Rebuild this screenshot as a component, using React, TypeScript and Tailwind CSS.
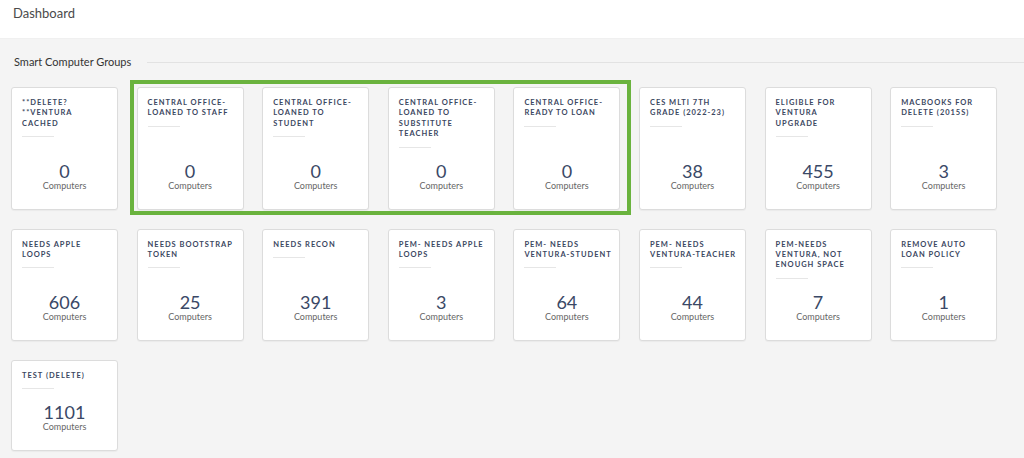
import React from "react";

type Group = { lines: string[]; count: number };

const groups: Group[] = [
  { lines: ["**DELETE?", "**VENTURA", "CACHED"], count: 0 },
  { lines: ["CENTRAL OFFICE-", "LOANED TO STAFF"], count: 0 },
  { lines: ["CENTRAL OFFICE-", "LOANED TO", "STUDENT"], count: 0 },
  { lines: ["CENTRAL OFFICE-", "LOANED TO", "SUBSTITUTE", "TEACHER"], count: 0 },
  { lines: ["CENTRAL OFFICE-", "READY TO LOAN"], count: 0 },
  { lines: ["CES MLTI 7TH", "GRADE (2022-23)"], count: 38 },
  { lines: ["ELIGIBLE FOR", "VENTURA", "UPGRADE"], count: 455 },
  { lines: ["MACBOOKS FOR", "DELETE (2015S)"], count: 3 },
  { lines: ["NEEDS APPLE", "LOOPS"], count: 606 },
  { lines: ["NEEDS BOOTSTRAP", "TOKEN"], count: 25 },
  { lines: ["NEEDS RECON"], count: 391 },
  { lines: ["PEM- NEEDS APPLE", "LOOPS"], count: 3 },
  { lines: ["PEM- NEEDS", "VENTURA-STUDENT"], count: 64 },
  { lines: ["PEM- NEEDS", "VENTURA-TEACHER"], count: 44 },
  { lines: ["PEM-NEEDS", "VENTURA, NOT", "ENOUGH SPACE"], count: 7 },
  { lines: ["REMOVE AUTO", "LOAN POLICY"], count: 1 },
  { lines: ["TEST (DELETE)"], count: 1101 },
];

function GroupCard({ group }: { group: Group }) {
  return (
    <div className="flex min-h-[91px] flex-col rounded-[3px] border border-[#dcdcdc] bg-white px-[10px] pt-[10px] pb-[18px] shadow-[0_1px_1px_rgba(0,0,0,0.04)]">
      <div className="text-[7.5px] font-bold uppercase leading-[10.4px] tracking-[0.13em] text-[#3b4761]">
        {group.lines.map((l) => (
          <div key={l} className="whitespace-nowrap">
            {l}
          </div>
        ))}
      </div>
      <div className="mt-[7px] h-px w-8 bg-[#e6e6e6]" />
      <div className="mt-[14px] flex flex-1 flex-col items-center justify-end">
        <div className="text-[18px] font-normal leading-[18px] text-[#3a4866]">{group.count}</div>
        <div className="text-[9px] leading-[11px] text-[#666]">Computers</div>
      </div>
    </div>
  );
}

export default function App() {
  return (
    <div className="h-[458px] overflow-hidden bg-white font-['Lato','Open_Sans',sans-serif]">
      <header className="h-[39px] border-b border-[#f0f0f0] bg-white px-[13px] pt-[4px]">
        <h1 className="text-[13px] leading-[18px] text-[#4a4a4a]">Dashboard</h1>
      </header>
      <section className="relative h-full bg-[#f4f4f4] pt-[16px]">
        <div className="flex items-center pl-[14px]">
          <h2 className="text-[11px] leading-[14px] text-[#333]">Smart Computer Groups</h2>
          <div className="ml-[16px] h-px flex-1 bg-[#e2e2e2]" />
        </div>
        <div className="relative mt-[18px] ml-[11px] grid grid-cols-[repeat(8,107px)] gap-x-[18.6px] gap-y-[19px]">
          {groups.map((g) => (
            <GroupCard key={g.lines.join(" ")} group={g} />
          ))}
          <div className="pointer-events-none absolute left-[119px] top-[-7px] h-[135px] w-[501px] border-4 border-[#6ab33e]" />
        </div>
      </section>
    </div>
  );
}
